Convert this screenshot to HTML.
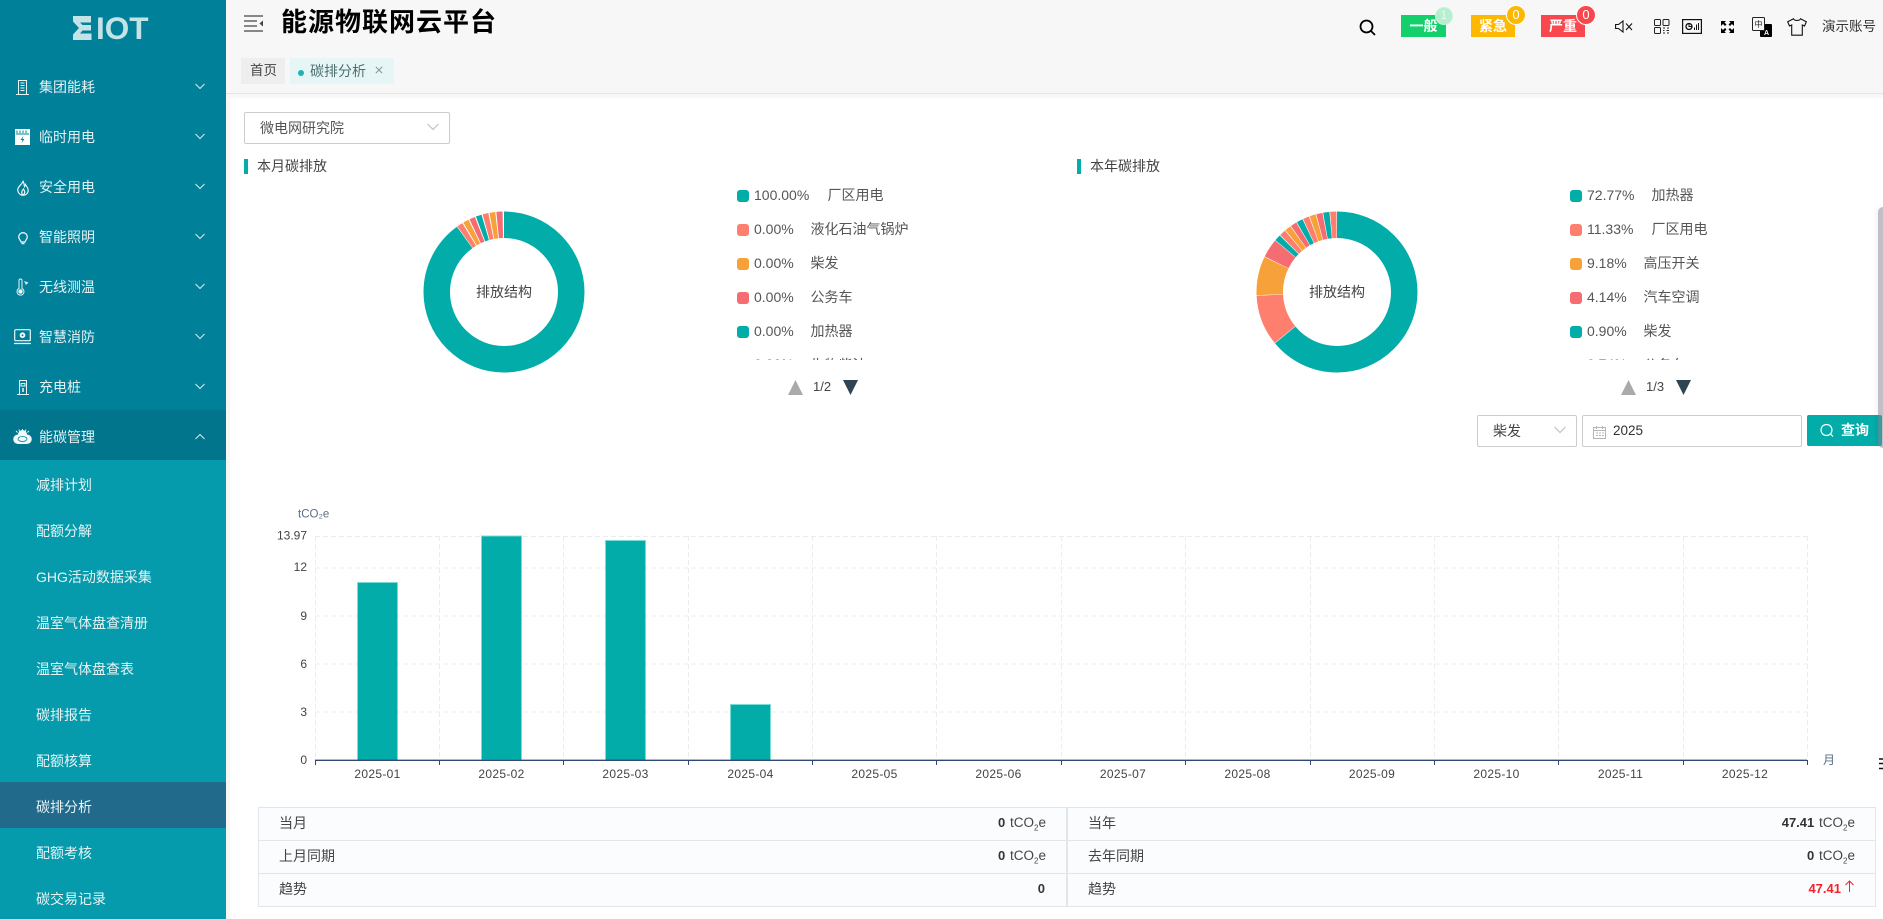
<!DOCTYPE html>
<html lang="zh-CN"><head><meta charset="utf-8"><title>能源物联网云平台</title>
<style>
*{box-sizing:border-box}
html,body{margin:0;padding:0;width:1883px;height:919px;overflow:hidden;background:#f7f7f7;font-family:"Liberation Sans","Noto Sans CJK SC",sans-serif;font-size:14px;color:#555}
.t{position:absolute;line-height:20px;white-space:nowrap}
.a{position:absolute}
#side{position:absolute;left:0;top:0;width:226px;height:919px;background:#01809a;overflow:hidden}
#side .m{position:absolute;left:39px;color:#e4f2f4;line-height:20px;white-space:nowrap}
#side .s{position:absolute;left:36px;color:#e6f4f5;line-height:20px;white-space:nowrap}
#side svg{position:absolute;overflow:visible}
.badge{position:absolute;top:15px;height:22px;color:#fff;font-weight:700;text-align:center;line-height:23px;font-size:14px}
.num{position:absolute;width:20px;height:20px;border-radius:50%;color:#fff;font-size:13px;line-height:17px;text-align:center;border:1.500px solid #fff}
.row{position:absolute;height:20px;line-height:20px;white-space:nowrap}
.ic{position:absolute;width:12px;height:12px;border-radius:3px}
.cell{position:absolute;line-height:20px;white-space:nowrap;color:#444}
.val{position:absolute;line-height:20px;white-space:nowrap;color:#444;text-align:right;font-size:13.500px}
.val b{font-weight:700;color:#333;font-size:13px;margin-right:1px}
sub{font-size:8px;line-height:0}
.box{position:absolute;background:#fff;border:1px solid #ccc;border-radius:2px}
</style></head><body>
<div id="side">
<div class="a" style="left:0;top:410px;width:226px;height:50px;background:#00758c"></div>
<div class="a" style="left:0;top:460px;width:226px;height:459px;background:#059aac"></div>
<div class="a" style="left:0;top:782px;width:226px;height:46px;background:#216a8b"></div>
<svg style="left:73px;top:16px" width="19" height="24" viewBox="0 0 19 24"><path d="M0 0H18V6.500H7L9.500 9H18V14.500H9.500L7 17.500H18.500V24H0V18.500L6 12L0 5.500Z" fill="#c4e3e7"/></svg>
<div class="a" style="left:96px;top:11px;font-size:31.500px;font-weight:700;color:#c4e3e7;line-height:34px">IOT</div>

<div class="m" style="top:77px">集团能耗</div><div class="m" style="top:127px">临时用电</div><div class="m" style="top:177px">安全用电</div><div class="m" style="top:227px">智能照明</div><div class="m" style="top:277px">无线测温</div><div class="m" style="top:327px">智慧消防</div><div class="m" style="top:377px">充电桩</div><div class="m" style="top:427px">能碳管理</div>

<svg style="left:16px;top:80px" width="13" height="15" viewBox="0 0 13 15" fill="none" stroke="#eaf5f6"><path d="M2.500 14V.5H10.500V14M0 14.500H13M4.500 3H8.500M4.500 5.500H8.500M4.500 8H8.500M4.500 10.500H8.500"/></svg>
<svg style="left:15px;top:129px" width="15" height="16" viewBox="0 0 15 16"><rect width="15" height="16" fill="#fff"/><path d="M2 1.500V4M5 1.500V4M8 1.500V4M11 1.500V4M1 5H14" stroke="#01809a" fill="none"/><path d="M8.500 7L5.500 11H7.500L6.500 14L9.500 10H7.500Z" fill="#01809a"/></svg>
<svg style="left:17px;top:180px" width="12" height="16" viewBox="0 0 12 16" fill="none" stroke="#eaf5f6" stroke-width="1.200"><path d="M6 .8C6.500 3 2 5.500 1 8.500C0 12 3 15.300 6 15.300C9 15.300 12 12.500 11 9C10.500 7 9 6 8.500 4.500L7.500 6.500C7 4.500 7 2.500 6 .8ZM6 15C4 13.500 4.500 11 6.500 9C7.500 11 9 12.500 6 15Z"/></svg>
<svg style="left:18px;top:232px" width="10" height="13" viewBox="0 0 10 13"><path d="M5 .7A4.300 4.300 0 0 1 9.300 5C9.300 7.500 7 8.500 7 10H3C3 8.500 .7 7.500 .7 5A4.300 4.300 0 0 1 5 .7Z" fill="none" stroke="#eaf5f6" stroke-width="1.300"/><path d="M3.500 11.500H6.500" stroke="#eaf5f6" stroke-width="1.500"/></svg>
<svg style="left:16px;top:279px" width="13" height="17" viewBox="0 0 13 17"><path d="M3 1.500A1.500 1.500 0 0 1 6 1.500V9.500A3.500 3.500 0 1 1 3 9.500Z" fill="none" stroke="#eaf5f6"/><circle cx="4.500" cy="12.500" r="2.200" fill="#eaf5f6"/><path d="M8 2L12.500 3.500L10 6Z" fill="#d4ebee"/></svg>
<svg style="left:14px;top:329px" width="17" height="16" viewBox="0 0 17 16"><rect x=".7" y=".7" width="15.600" height="11" rx="1" fill="none" stroke="#eaf5f6" stroke-width="1.200"/><circle cx="8.500" cy="6.200" r="2.800" fill="#fff"/><circle cx="8.500" cy="6.200" r="1" fill="#01809a"/><path d="M0 14.500H17" stroke="#eaf5f6" stroke-width="1.200"/></svg>
<svg style="left:17px;top:380px" width="12" height="15" viewBox="0 0 12 15" fill="none" stroke="#eaf5f6"><path d="M2.500 14V.5H9.500V14M0 14.500H12M4 3.500H8V6H4Z"/><path d="M6 8V12" stroke-width="1.500"/></svg>
<svg style="left:14px;top:429px" width="17" height="16" viewBox="0 0 17 16"><path d="M4 5.500A4.500 4.500 0 0 1 13 5.500A3.800 3.800 0 0 1 13 15H4A3.800 3.800 0 0 1 4 5.500Z" fill="#f1f8f9"/><path d="M2 2L3.500 3.500M5 .5L5.500 2.500M8.500 0V2M12 .5L11.500 2.500M15 2L13.500 3.500" stroke="#e8f4f5"/><ellipse cx="8.500" cy="10" rx="4.500" ry="2.500" fill="none" stroke="#01809a" stroke-width=".8"/></svg>

<svg style="left:0;top:0" width="226" height="460" fill="none" stroke="#d6ebee" stroke-width="1"><path d="M195.500 84L200 88.500L204.500 84M195.500 134L200 138.500L204.500 134M195.500 184L200 188.500L204.500 184M195.500 234L200 238.500L204.500 234M195.500 284L200 288.500L204.500 284M195.500 334L200 338.500L204.500 334M195.500 384L200 388.500L204.500 384M195.500 439L200 434.500L204.500 439"/></svg>

<div class="s" style="top:475px">减排计划</div><div class="s" style="top:521px">配额分解</div><div class="s" style="top:567px">GHG活动数据采集</div><div class="s" style="top:613px">温室气体盘查清册</div><div class="s" style="top:659px">温室气体盘查表</div><div class="s" style="top:705px">碳排报告</div><div class="s" style="top:751px">配额核算</div><div class="s" style="top:797px">碳排分析</div><div class="s" style="top:843px">配额考核</div><div class="s" style="top:889px">碳交易记录</div>
</div>

<!-- header -->
<svg class="a" style="left:244px;top:15px" width="20" height="17" viewBox="0 0 20 17" fill="none" stroke="#444" stroke-width="1.300"><path d="M0 1H19M0 6H13M0 11H13M0 16H19"/><path d="M19 5.500L15.500 8.500L19 11.500Z" fill="#444" stroke="none"/></svg>
<div class="t" style="left:281px;top:6px;font-size:26px;font-weight:700;line-height:32px;color:#000;letter-spacing:1px">能源物联网云平台</div>

<svg class="a" style="left:1359px;top:19px" width="17" height="17" viewBox="0 0 17 17" fill="none" stroke="#000" stroke-width="1.800"><circle cx="7.500" cy="7.500" r="6"/><path d="M12 12L16 16"/></svg>
<div class="badge" style="left:1401px;width:45px;background:#14d06c">一般</div>
<div class="badge" style="left:1471px;width:44px;background:#feb800">紧急</div>
<div class="badge" style="left:1541px;width:44px;background:#f9484d">严重</div>
<div class="num" style="left:1435px;top:7px;width:18px;height:18px;line-height:15px;font-size:12px;background:#b5efcf;border-color:#c7f2da;color:#e6faef">1</div>
<div class="num" style="left:1506px;top:4.500px;background:#feb800">0</div>
<div class="num" style="left:1576px;top:4.500px;background:#f9484d">0</div>

<svg class="a" style="left:1615px;top:20px" width="18" height="13" viewBox="0 0 18 13" fill="none" stroke="#111" stroke-width="1.100"><path d="M.6 4.500H3.500L8 1V12L3.500 8.500H.6Z"/><path d="M11 3.500L17 10M17 3.500L11 10"/></svg>
<svg class="a" style="left:1654px;top:19px" width="16" height="15" viewBox="0 0 16 15" fill="none" stroke="#222" stroke-width="1"><rect x=".5" y=".5" width="6" height="6" rx="1"/><rect x="9" y=".5" width="6" height="6" rx="1"/><rect x=".5" y="8.500" width="6" height="6" rx="1"/><path d="M9 9H11M13 9H15M9 11.500H10.500M12.500 11.500H15M9 14H11M13 14H15"/></svg>
<svg class="a" style="left:1682px;top:19px" width="20" height="15" viewBox="0 0 20 15" fill="none" stroke="#111"><rect x=".6" y=".6" width="18.800" height="13.800" stroke-width="1.200"/><circle cx="7" cy="7.500" r="3" stroke-width="1.300"/><path d="M7 4.500V7.500H10" stroke-width="1"/><path d="M12.500 11V8.500M14.500 11V5.500M16.500 11V4" stroke-width="1"/></svg>
<svg class="a" style="left:1721px;top:21px" width="13" height="12" viewBox="0 0 13 12" fill="#000"><path d="M0 0H5L3.500 1.500L5.500 3.500L4 5L2 3L0 5ZM13 0V5L11 3L9 5L7.500 3.500L9.500 1.500L8 0ZM0 12V7L2 9L4 7L5.500 8.500L3.500 10.500L5 12ZM13 12H8L9.500 10.500L7.500 8.500L9 7L11 9L13 7Z"/></svg>
<svg class="a" style="left:1752px;top:17px" width="20" height="20" viewBox="0 0 20 20"><rect x="8" y="7" width="12" height="13" rx="1" fill="#000"/><rect x=".5" y=".5" width="12" height="13" rx="1" fill="#f7f7f7" stroke="#222"/><text x="6.500" y="10" text-anchor="middle" font-size="8" fill="#222" font-family="Noto Sans CJK SC">中</text><text x="14.500" y="18" text-anchor="middle" font-size="7" font-weight="700" fill="#fff" font-family="Liberation Sans">A</text></svg>
<svg class="a" style="left:1787px;top:18px" width="20" height="18" viewBox="0 0 20 18" fill="none" stroke="#111" stroke-width="1.100"><path d="M6.500 .8C7.500 3 12.500 3 13.500 .8L19.300 3.800L17.500 8L15.300 7V17.200H4.700V7L2.500 8L.7 3.800Z"/></svg>
<div class="t" style="left:1822px;top:17px;font-size:13.500px;color:#333">演示账号</div>

<!-- tabs -->
<div class="a" style="left:241px;top:58px;width:44px;height:26px;background:#eeeeee"></div>
<div class="t" style="left:250px;top:61px;color:#444;font-size:13.500px">首页</div>
<div class="a" style="left:290px;top:58px;width:104px;height:26px;background:#e6f6f6"></div>
<div class="a" style="left:298px;top:70px;width:6px;height:6px;border-radius:50%;background:#1fb3ae"></div>
<div class="t" style="left:310px;top:61px;color:#4f6f72">碳排分析</div>
<svg class="a" style="left:375px;top:66px" width="8" height="8" fill="none" stroke="#7d9093"><path d="M.8 .8L7.200 7.200M7.200 .8L.8 7.200"/></svg>
<div class="a" style="left:226px;top:93px;width:1657px;height:1px;background:#e4e4e4"></div>

<!-- content -->
<div class="a" style="left:230px;top:98px;width:1653px;height:821px;background:#fff"></div>

<div class="box" style="left:244px;top:112px;width:206px;height:32px"></div>
<div class="t" style="left:260px;top:118px;color:#555">微电网研究院</div>
<svg class="a" style="left:427px;top:123px" width="12" height="8" fill="none" stroke="#bbb"><path d="M.5 1L6 6.500L11.500 1"/></svg>

<div class="a" style="left:244px;top:159px;width:4px;height:15px;background:#02aca8"></div>
<div class="t" style="left:257px;top:156px;color:#444">本月碳排放</div>
<div class="a" style="left:1077px;top:159px;width:4px;height:15px;background:#02aca8"></div>
<div class="t" style="left:1090px;top:156px;color:#444">本年碳排放</div>

<!-- donuts -->
<svg class="a" style="left:414px;top:202px" width="180" height="180" viewBox="0 0 180 180" fill="none" stroke-width="26.500">
<g transform="rotate(-90 90 90)">
<circle cx="90" cy="90" r="67.250" pathLength="360" stroke="#02aca8" stroke-dasharray="324.600 360"/>
<circle cx="90" cy="90" r="67.250" pathLength="360" stroke="#ff7f6e" stroke-dasharray="4.200 360" stroke-dashoffset="-325"/>
<circle cx="90" cy="90" r="67.250" pathLength="360" stroke="#f7a13a" stroke-dasharray="4.200 360" stroke-dashoffset="-330"/>
<circle cx="90" cy="90" r="67.250" pathLength="360" stroke="#f56c73" stroke-dasharray="4.200 360" stroke-dashoffset="-335"/>
<circle cx="90" cy="90" r="67.250" pathLength="360" stroke="#02aca8" stroke-dasharray="4.200 360" stroke-dashoffset="-340"/>
<circle cx="90" cy="90" r="67.250" pathLength="360" stroke="#ff7f6e" stroke-dasharray="4.200 360" stroke-dashoffset="-345"/>
<circle cx="90" cy="90" r="67.250" pathLength="360" stroke="#f7a13a" stroke-dasharray="4.200 360" stroke-dashoffset="-350"/>
<circle cx="90" cy="90" r="67.250" pathLength="360" stroke="#f56c73" stroke-dasharray="4.400 360" stroke-dashoffset="-355"/>
</g></svg>
<div class="t" style="left:476px;top:281.500px;color:#444;width:56px;text-align:center">排放结构</div>

<svg class="a" style="left:1247px;top:202px" width="180" height="180" viewBox="0 0 180 180" fill="none" stroke-width="26.500">
<g transform="rotate(-90 90 90)">
<circle cx="90" cy="90" r="67.250" pathLength="360" stroke="#02aca8" stroke-dasharray="230.600 360"/>
<circle cx="90" cy="90" r="67.250" pathLength="360" stroke="#ff7f6e" stroke-dasharray="36.600 360" stroke-dashoffset="-231"/>
<circle cx="90" cy="90" r="67.250" pathLength="360" stroke="#f7a13a" stroke-dasharray="28.100 360" stroke-dashoffset="-268"/>
<circle cx="90" cy="90" r="67.250" pathLength="360" stroke="#f56c73" stroke-dasharray="13.600 360" stroke-dashoffset="-296.500"/>
<circle cx="90" cy="90" r="67.250" pathLength="360" stroke="#02aca8" stroke-dasharray="4.500 360" stroke-dashoffset="-310.500"/>
<circle cx="90" cy="90" r="67.250" pathLength="360" stroke="#ff7f6e" stroke-dasharray="4.500 360" stroke-dashoffset="-315.500"/>
<circle cx="90" cy="90" r="67.250" pathLength="360" stroke="#f7a13a" stroke-dasharray="4.500 360" stroke-dashoffset="-320.500"/>
<circle cx="90" cy="90" r="67.250" pathLength="360" stroke="#f56c73" stroke-dasharray="4.500 360" stroke-dashoffset="-325.500"/>
<circle cx="90" cy="90" r="67.250" pathLength="360" stroke="#02aca8" stroke-dasharray="4.500 360" stroke-dashoffset="-330.500"/>
<circle cx="90" cy="90" r="67.250" pathLength="360" stroke="#ff7f6e" stroke-dasharray="4.500 360" stroke-dashoffset="-335.500"/>
<circle cx="90" cy="90" r="67.250" pathLength="360" stroke="#f7a13a" stroke-dasharray="4.500 360" stroke-dashoffset="-340.500"/>
<circle cx="90" cy="90" r="67.250" pathLength="360" stroke="#f56c73" stroke-dasharray="4.500 360" stroke-dashoffset="-345.500"/>
<circle cx="90" cy="90" r="67.250" pathLength="360" stroke="#02aca8" stroke-dasharray="4.500 360" stroke-dashoffset="-350.500"/>
<circle cx="90" cy="90" r="67.250" pathLength="360" stroke="#ff7f6e" stroke-dasharray="4.500 360" stroke-dashoffset="-355.500"/>
</g></svg>
<div class="t" style="left:1309px;top:281.500px;color:#444;width:56px;text-align:center">排放结构</div>

<!-- left legend -->
<div class="a" style="left:730px;top:178px;width:320px;height:182px;overflow:hidden">
<div class="ic" style="left:7px;top:12px;background:#02aca8"></div><div class="row" style="left:24px;top:7px">100.00%</div><div class="row" style="left:97.500px;top:7px">厂区用电</div>
<div class="ic" style="left:7px;top:46px;background:#ff7f6e"></div><div class="row" style="left:24px;top:41px">0.00%</div><div class="row" style="left:80.500px;top:41px">液化石油气锅炉</div>
<div class="ic" style="left:7px;top:80px;background:#f7a13a"></div><div class="row" style="left:24px;top:75px">0.00%</div><div class="row" style="left:80.500px;top:75px">柴发</div>
<div class="ic" style="left:7px;top:114px;background:#f56c73"></div><div class="row" style="left:24px;top:109px">0.00%</div><div class="row" style="left:80.500px;top:109px">公务车</div>
<div class="ic" style="left:7px;top:148px;background:#02aca8"></div><div class="row" style="left:24px;top:143px">0.00%</div><div class="row" style="left:80.500px;top:143px">加热器</div>
<div class="row" style="left:24px;top:176px">0.00%</div><div class="row" style="left:80.500px;top:177px">生物柴油</div>
</div>
<svg class="a" style="left:788px;top:380px" width="70" height="15"><path d="M7.500 0L15 15H0Z" fill="#aaa"/><path d="M55 0H70L62.500 15Z" fill="#2f4554"/></svg>
<div class="t" style="left:813px;top:377px;font-size:13px;color:#444">1/2</div>

<!-- right legend -->
<div class="a" style="left:1563px;top:178px;width:300px;height:182px;overflow:hidden">
<div class="ic" style="left:7px;top:12px;background:#02aca8"></div><div class="row" style="left:24px;top:7px">72.77%</div><div class="row" style="left:88.500px;top:7px">加热器</div>
<div class="ic" style="left:7px;top:46px;background:#ff7f6e"></div><div class="row" style="left:24px;top:41px">11.33%</div><div class="row" style="left:88.500px;top:41px">厂区用电</div>
<div class="ic" style="left:7px;top:80px;background:#f7a13a"></div><div class="row" style="left:24px;top:75px">9.18%</div><div class="row" style="left:80.500px;top:75px">高压开关</div>
<div class="ic" style="left:7px;top:114px;background:#f56c73"></div><div class="row" style="left:24px;top:109px">4.14%</div><div class="row" style="left:80.500px;top:109px">汽车空调</div>
<div class="ic" style="left:7px;top:148px;background:#02aca8"></div><div class="row" style="left:24px;top:143px">0.90%</div><div class="row" style="left:80.500px;top:143px">柴发</div>
<div class="row" style="left:24px;top:176px">0.74%</div><div class="row" style="left:80.500px;top:177px">公务车</div>
</div>
<svg class="a" style="left:1621px;top:380px" width="70" height="15"><path d="M7.500 0L15 15H0Z" fill="#aaa"/><path d="M55 0H70L62.500 15Z" fill="#2f4554"/></svg>
<div class="t" style="left:1646px;top:377px;font-size:13px;color:#444">1/3</div>

<!-- filters -->
<div class="box" style="left:1477px;top:415px;width:100px;height:32px"></div>
<div class="t" style="left:1493px;top:421px;color:#444">柴发</div>
<svg class="a" style="left:1554px;top:426px" width="12" height="8" fill="none" stroke="#bbb"><path d="M.5 1L6 6.500L11.500 1"/></svg>
<div class="box" style="left:1582px;top:415px;width:220px;height:32px"></div>
<svg class="a" style="left:1593px;top:426px" width="13" height="13" viewBox="0 0 13 13" fill="none" stroke="#b5b5b5"><rect x=".5" y="1.500" width="12" height="11"/><path d="M.5 4.500H12.500M3.500 0V3M9.500 0V3M3 7H5M6 7H8M9 7H11M3 9.500H5M6 9.500H8M9 9.500H11"/></svg>
<div class="t" style="left:1613px;top:421px;font-size:13.500px;color:#333">2025</div>
<div class="a" style="left:1807px;top:415px;width:75px;height:31px;background:#02aca8;border-radius:2px"></div>
<svg class="a" style="left:1820px;top:423px" width="14" height="15" viewBox="0 0 14 15" fill="none" stroke="#fff" stroke-width="1.200"><circle cx="6.500" cy="7" r="5.500"/><path d="M10.500 11L13 13.500"/></svg>
<div class="t" style="left:1841px;top:420px;color:#fff;font-weight:700">查询</div>
<div class="a" style="left:1878px;top:207px;width:5px;height:241px;background:rgba(130,130,142,.5);border-radius:5px 0 0 5px;box-shadow:-2px 0 4px rgba(0,0,0,.05)"></div>

<!-- chart -->
<svg class="a" style="left:230px;top:490px" width="1653" height="300" viewBox="230 490 1653 300" font-family="Liberation Sans, Noto Sans CJK SC, sans-serif" font-size="12" fill="#444">
<g stroke="#ececec" stroke-dasharray="5 3" fill="none">
<path d="M315 536.500H1807M315 568H1807M315 616H1807M315 664H1807M315 712H1807"/>
<path d="M315.500 536V760M439.500 536V760M563.500 536V760M688.500 536V760M812.500 536V760M936.500 536V760M1061.500 536V760M1185.500 536V760M1310.500 536V760M1434.500 536V760M1558.500 536V760M1683.500 536V760M1807.500 536V760"/>
</g>
<g fill="#02aca8" stroke="#7adcd4" stroke-width="1">
<rect x="357.500" y="582.500" width="40" height="178"/>
<rect x="481.500" y="536" width="40" height="224"/>
<rect x="605.500" y="540.500" width="40" height="220"/>
<rect x="730.500" y="704.500" width="40" height="56"/>
</g>
<path d="M315 760.300H1807" stroke="#33486e" stroke-width="1.300"/>
<path d="M315.500 760V765M439.500 760V765M563.500 760V765M688.500 760V765M812.500 760V765M936.500 760V765M1061.500 760V765M1185.500 760V765M1310.500 760V765M1434.500 760V765M1558.500 760V765M1683.500 760V765M1807.500 760V765" stroke="#33486e"/>
<g text-anchor="end"><text x="307" y="539.500">13.97</text><text x="307" y="571">12</text><text x="307" y="620">9</text><text x="307" y="668">6</text><text x="307" y="716">3</text><text x="307" y="764">0</text></g>
<text x="298" y="517.500" font-size="11.500" fill="#5b6b86">tCO₂e</text>
<g text-anchor="middle" letter-spacing=".3">
<text x="377.500" y="778">2025-01</text><text x="501.500" y="778">2025-02</text><text x="625.500" y="778">2025-03</text><text x="750.500" y="778">2025-04</text><text x="874.500" y="778">2025-05</text><text x="998.500" y="778">2025-06</text><text x="1123" y="778">2025-07</text><text x="1247.500" y="778">2025-08</text><text x="1372" y="778">2025-09</text><text x="1496.500" y="778">2025-10</text><text x="1620.500" y="778">2025-11</text><text x="1745" y="778">2025-12</text>
</g>
<text x="1823" y="764" fill="#5b6b86">月</text>
<path d="M1879 759H1883M1879 763.500H1883M1879 768.500H1883" stroke="#111" stroke-width="1.500"/>
</svg>

<!-- table -->
<div class="a" style="left:258px;top:807px;width:1618px;height:100px;background:#fbfcfe;border:1px solid #e2e5e9"></div>
<div class="a" style="left:258px;top:840px;width:1618px;height:1px;background:#e2e5e9"></div>
<div class="a" style="left:258px;top:873px;width:1618px;height:1px;background:#e2e5e9"></div>
<div class="a" style="left:1066px;top:807px;width:2px;height:100px;background:#e2e5e9"></div>
<div class="cell" style="left:279px;top:813px">当月</div><div class="cell" style="left:279px;top:846px">上月同期</div><div class="cell" style="left:279px;top:879px">趋势</div>
<div class="cell" style="left:1088px;top:813px">当年</div><div class="cell" style="left:1088px;top:846px">去年同期</div><div class="cell" style="left:1088px;top:879px">趋势</div>
<div class="val" style="right:837px;top:813px"><b>0</b> tCO<sub>2</sub>e</div>
<div class="val" style="right:837px;top:846px"><b>0</b> tCO<sub>2</sub>e</div>
<div class="val" style="right:837px;top:879px"><b>0</b></div>
<div class="val" style="right:28px;top:813px"><b>47.41</b> tCO<sub>2</sub>e</div>
<div class="val" style="right:28px;top:846px"><b>0</b> tCO<sub>2</sub>e</div>
<div class="val" style="right:28px;top:879px;color:#f5222d"><b style="color:#f5222d">47.41</b><svg width="11" height="12" viewBox="0 0 11 12" fill="none" stroke="#f5222d" style="margin-left:2px;vertical-align:1px"><path d="M5.500 12V1M1.500 5L5.500 1L9.500 5"/></svg></div>
</body></html>
